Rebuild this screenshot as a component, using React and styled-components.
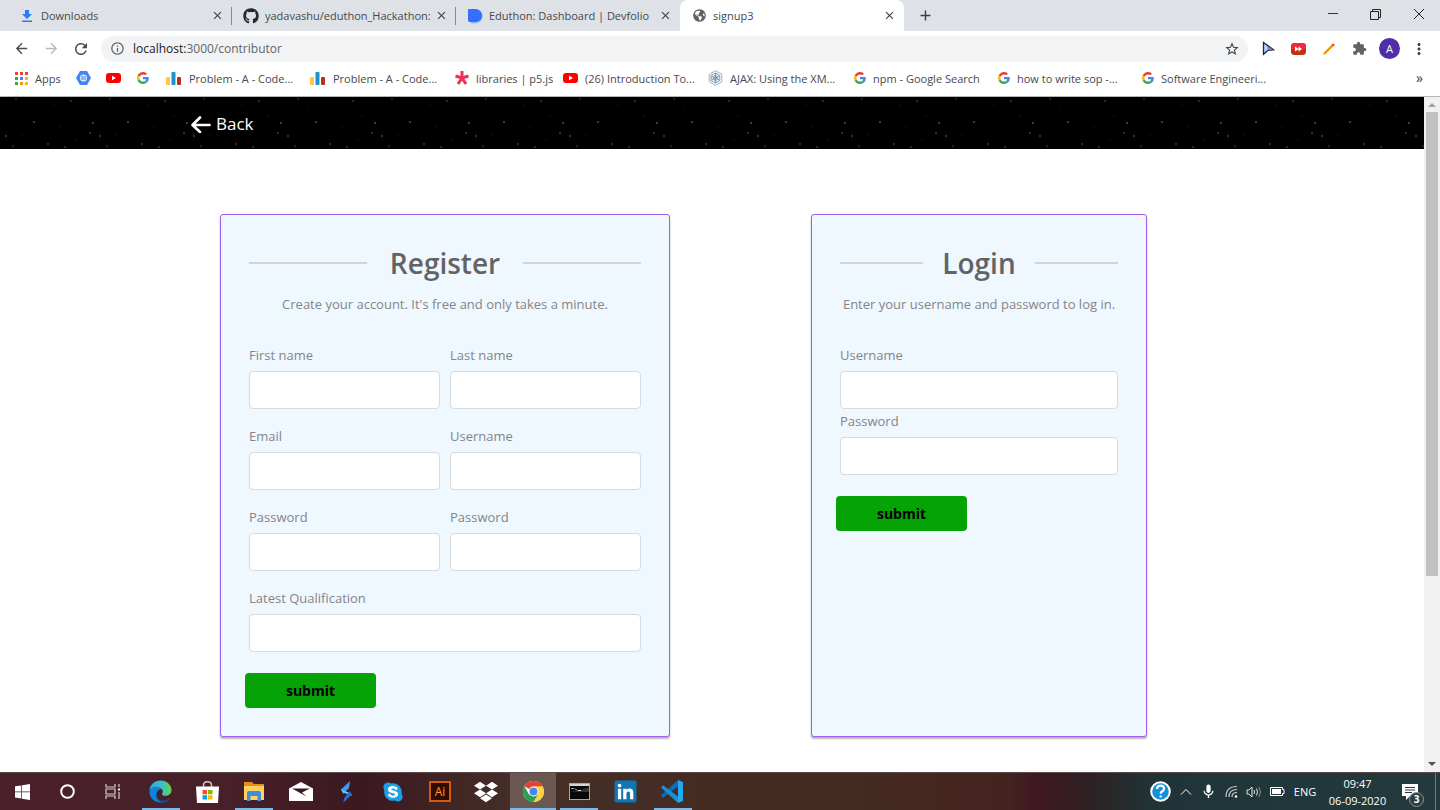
import React from 'react';
import styled, { createGlobalStyle, css } from 'styled-components';
import { FaGithub, FaDropbox, FaLinkedin, FaSkype, FaGlobeAmericas } from 'react-icons/fa';
import { MdExtension, MdMoreVert, MdStarBorder, MdInfoOutline, MdArrowBack, MdArrowForward, MdRefresh, MdClose, MdAdd, MdMic } from 'react-icons/md';

const GlobalStyle = createGlobalStyle`
* { box-sizing: border-box; }
body {
    margin: 0;
    background: #fff;
    font-family: 'Open Sans', 'Noto Sans', sans-serif;
}
button, input { font-family: inherit; }
svg { display: block; flex: none; }
`

const Window = styled.div`
min-height: 100vh;
display: flex;
flex-direction: column;
`

/* tab strip */
const TabStrip = styled.div`
display: flex;
align-items: stretch;
height: 31px;
padding-left: 8px;
background: #dee1e6;
`
const Tab = styled.div`
display: flex;
align-items: center;
flex: 0 1 224px;
min-width: 0;
padding: 0 8px 0 11px;
color: #45494d;
font-size: 11px;
${props => props.$active ? css`
    background: #fff;
    border-radius: 8px 8px 0 0;
` : css`
    background: linear-gradient(#85888c, #85888c) right center / 1px 18px no-repeat;
`}
${props => props.$last && css`background: none;`}
`
const TabIcon = styled.span`
display: flex;
justify-content: center;
flex: none;
width: 16px;
margin-right: 6px;
`
const TabTitle = styled.span`
flex: 1;
overflow: hidden;
white-space: nowrap;
`
const IconButton = styled.button`
display: flex;
align-items: center;
justify-content: center;
flex: none;
width: ${props => props.$w || 16}px;
padding: 0;
border: none;
background: none;
color: ${props => props.$color || '#3c4043'};
cursor: pointer;
`
const WindowControls = styled.div`
display: flex;
margin-left: auto;
padding-bottom: 3px;
`

/* address bar */
const Toolbar = styled.div`
display: flex;
align-items: center;
height: 35px;
padding: 0 7px 0 6px;
background: #fff;
`
const AddressBar = styled.div`
display: flex;
align-items: center;
flex: 1;
min-width: 0;
height: 26px;
margin: 0 5px;
padding: 0 4px 0 9px;
gap: 8px;
border-radius: 13px;
background: #f1f3f4;
color: #5f6368;
font-size: 12px;
`
const Url = styled.span`
flex: 1;
b {
    font-weight: normal;
    color: #202124;
}
`
const Avatar = styled.button`
width: 21px;
height: 21px;
margin: 0 5px;
padding: 0;
border: none;
border-radius: 50%;
background: #512da8;
color: #fff;
font-size: 11px;
`

/* bookmarks */
const Bookmarks = styled.nav`
display: flex;
align-items: center;
height: 31px;
padding: 0 17px 6px 13px;
border-bottom: 1px solid #b4b6b8;
background: #fff;
`
const Bookmark = styled.a`
display: flex;
align-items: center;
flex: 0 1 ${props => props.$w}px;
min-width: 0;
gap: 7px;
color: #45494d;
font-size: 11px;
white-space: nowrap;
text-decoration: none;
`
const More = styled.button`
margin-left: auto;
padding: 0;
border: none;
background: none;
color: #3c4043;
font-size: 14px;
line-height: 14px;
`

/* page */
const Viewport = styled.div`
flex: 1;
display: flex;
`
const Page = styled.main`
flex: 1;
min-width: 0;
`
const dot = (x, y, color) => `radial-gradient(circle at ${x}px ${y}px, ${color} 1px, transparent 1px)`
const Header = styled.header`
display: flex;
align-items: center;
height: 52px;
padding: 2px 0 0 191px;
background-color: #000;
background-image: ${[
    dot(16, 2, '#0a300d'), dot(71, 4, '#0b3a0e'), dot(34, 25, '#0f5514'),
    dot(93, 26, '#0f5514'), dot(90, 36, '#0c4010'), dot(6, 39, '#0c4a10'),
    dot(48, 47, '#0c4010'), dot(13, 49, '#0a300d'), dot(65, 50, '#0b3a0e'),
    dot(26, 12, '#0a0a0a'), dot(54, 8, '#0a0a0a'), dot(80, 19, '#0a0a0a'),
    dot(60, 30, '#0a0a0a'), dot(22, 38, '#0a0a0a'), dot(76, 43, '#0a0a0a')
].join(', ')};
background-size: 94px 52px;
`
const BackLink = styled.a`
display: flex;
align-items: center;
gap: 5px;
color: #fff;
font-size: 17px;
line-height: 24px;
text-decoration: none;
`
const Forms = styled.div`
display: grid;
grid-template-columns: minmax(0, 450fr) minmax(0, 336fr);
gap: 141px;
padding: 65px 277px 34px 220px;
`
const Card = styled.form`
padding: 28px;
border: 1px solid #a35ceb;
border-radius: 3px;
background: #eff7ff;
box-shadow: 0 2px 2px rgba(0, 0, 0, 0.3);
color: #858585;
`
const CardHead = styled.div`
display: flex;
align-items: center;
justify-content: space-between;
&::before, &::after {
    content: '';
    flex: 0 0 30%;
    height: 2px;
    background: #d1d3d4;
}
`
const Title = styled.h2`
margin: 0;
color: #636363;
font-size: 28px;
font-weight: 600;
line-height: 40px;
`
const Hint = styled.p`
margin: 9px 0 27px;
font-size: 13px;
line-height: 24px;
text-align: center;
white-space: nowrap;
`
const Fields = styled.div`
display: grid;
grid-template-columns: ${props => props.$cols === 2 ? '1fr 1fr' : '1fr'};
gap: ${props => props.$cols === 2 ? '15px 10px' : '0'};
`
const Field = styled.label`
display: flex;
flex-direction: column;
gap: 4px;
min-width: 0;
font-size: 13px;
line-height: 24px;
${props => props.$wide && css`grid-column: 1 / -1;`}
`
const Input = styled.input`
width: 100%;
height: 38px;
padding: 6px 12px;
border: 1px solid #d5dbe1;
border-radius: 4px;
outline: none;
background: #fff;
font-size: 13px;
`
const Submit = styled.button`
display: block;
width: 131px;
height: 35px;
margin: 21px 0 0 -4px;
padding: 0;
border: none;
border-radius: 4px;
background: #06a306;
color: #000;
font-size: 14px;
font-weight: bold;
cursor: pointer;
`

const Scrollbar = styled.div`
display: flex;
flex-direction: column;
align-items: center;
width: 16px;
padding: 5px 0;
gap: 5px;
background: #f1f1f1;
`
const Track = styled.div`
flex: 1;
width: 12px;
`
const Thumb = styled.div`
height: 72%;
background: #c1c1c1;
`

/* taskbar */
const TaskBar = styled.footer`
display: flex;
align-items: stretch;
height: 38px;
border-top: 1px solid #5c4a4c;
background: linear-gradient(to right, #4a202b 0, #47202a 16%, #3b1820 25%, #452f27 36%, #44291f 62%, #44231f 70%, #3f1822 72%, #2c2224 76%, #203437 80%, #243a3d 100%);
color: #fff;
`
const Task = styled.button`
display: flex;
align-items: center;
justify-content: center;
flex: none;
width: ${props => props.$w || 47}px;
padding: 0;
border: none;
background: ${props => props.$active ? '#6b5851' : 'none'};
color: #fff;
${props => props.$open && css`
    background-image: linear-gradient(#76b9ed, #76b9ed);
    background-position: center bottom;
    background-size: ${props.$active ? '100%' : '38px'} 2px;
    background-repeat: no-repeat;
`}
`
const Tray = styled.div`
display: flex;
align-items: center;
margin-left: auto;
`
const TrayButton = styled(Task)`
width: ${props => props.$w || 22}px;
height: 100%;
font-size: 11px;
`
const Clock = styled.time`
width: 73px;
font-size: 11px;
line-height: 17px;
text-align: center;
`
const Notices = styled.button`
position: relative;
width: 42px;
height: 100%;
padding: 0 0 0 8px;
border: none;
border-right: 1px solid #6e7c7e;
background: none;
margin-right: 4px;
`
const Count = styled.span`
position: absolute;
right: 11px;
bottom: 3px;
width: 15px;
height: 15px;
border: 1px solid #8b9698;
border-radius: 50%;
background: #2b3f42;
color: #fff;
font-size: 10px;
font-weight: bold;
line-height: 13px;
text-align: center;
`

const DownloadIcon = () => (
    <svg width="12" height="12" viewBox="0 0 12 12" fill="#2f7bf6">
        <path d="M4 0h4v4h3L6 9 1 4h3zM1 10.400h10V12H1z" />
    </svg>
)
const DevfolioIcon = () => (
    <svg width="15" height="16" viewBox="0 0 15 16">
        <path d="M1 2h7a6 6 0 0 1 6.500 7q-1 6.500-8 6.500H3z" fill="#8fbcff" />
        <path d="M1 1h7q6 1 6 6.500T8 14H1.500Q0 14 0 12V2q0-1 1-1z" fill="#3370ff" />
    </svg>
)
const GoogleIcon = () => (
    <svg width="12" height="12" viewBox="0 0 48 48">
        <path fill="#ea4335" d="M24 9.500c3.540 0 6.710 1.220 9.210 3.600l6.850-6.850C35.900 2.380 30.470 0 24 0 14.620 0 6.510 5.380 2.560 13.220l7.980 6.190C12.430 13.720 17.740 9.500 24 9.500z" />
        <path fill="#4285f4" d="M46.980 24.550c0-1.570-.15-3.090-.38-4.550H24v9.020h12.940c-.58 2.960-2.260 5.480-4.780 7.180l7.730 6c4.510-4.180 7.090-10.360 7.090-17.650z" />
        <path fill="#fbbc05" d="M10.530 28.590c-.48-1.450-.76-2.990-.76-4.590s.27-3.140.76-4.590l-7.980-6.190C.92 16.460 0 20.120 0 24c0 3.880.92 7.540 2.560 10.780z" />
        <path fill="#34a853" d="M24 48c6.480 0 11.930-2.130 15.890-5.810l-7.730-6c-2.150 1.450-4.920 2.300-8.160 2.300-6.260 0-11.570-4.220-13.470-9.910l-7.980 6.190C6.510 42.620 14.620 48 24 48z" />
    </svg>
)
const YoutubeIcon = () => (
    <svg width="15" height="12" viewBox="0 0 15 12">
        <rect y="1" width="15" height="10" rx="3" fill="#f00" />
        <path d="M6 3.700v4.600L10 6z" fill="#fff" />
    </svg>
)
const AppsIcon = () => {
    const colors = ['#ea4335', '#ea4335', '#ea4335', '#34a853', '#4285f4', '#fbbc05', '#34a853', '#f29900', '#fbbc05']
    return (
        <svg width="15" height="14" viewBox="0 0 15 14">
            {colors.map((c, i) => <rect key={i} x={2 + (i % 3) * 5} y={1 + Math.floor(i / 3) * 5} width="3" height="3" fill={c} />)}
        </svg>
    )
}
const HexIcon = () => (
    <svg width="15" height="14" viewBox="0 0 15 14">
        <path d="M4 0h7l4 7-4 7H4L0 7z" fill="#4285f4" />
        <circle cx="7.500" cy="7" r="3.600" fill="#dbe8fd" />
        <path d="M5 5.500h5v1H5zm0 2h5v1H5z" fill="#4285f4" />
    </svg>
)
const BarsIcon = () => (
    <svg width="16" height="13" viewBox="0 0 16 13">
        <rect y="5" width="4" height="8" rx="1" fill="#f9c846" />
        <rect x="5.500" width="4" height="13" rx="1" fill="#1e8fd0" />
        <rect x="11" y="5" width="4" height="8" rx="1" fill="#b8311b" />
    </svg>
)
const AsteriskIcon = () => (
    <svg width="14" height="14" viewBox="0 0 14 14" stroke="#f0304e" strokeWidth="3">
        <path d="M7 7V0M7 7l6.500-2M7 7l4 6M7 7l-4 6M7 7L.5 5" />
    </svg>
)
const NodeIcon = () => (
    <svg width="15" height="16" viewBox="0 0 15 16" fill="none" stroke="#7f97ad">
        <path d="M7.500.7l6.300 3.600v7.400l-6.300 3.600-6.300-3.600V4.300z" stroke="#8fb0cf" />
        <path d="M7.500 3l4.300 2.500v5L7.500 13l-4.300-2.500v-5zM3.200 5.500L7.500 8l4.300-2.500M7.500 3v10M3.200 10.500L7.500 8l4.300 2.500" />
        <circle cx="7.500" cy="8" r="2.400" />
    </svg>
)
const CursorIcon = () => (
    <svg width="13" height="15" viewBox="0 0 13 15">
        <path d="M1.500 1.500l10 7.200-5.500.6-4.500 4z" fill="#b9d2ff" stroke="#20243a" strokeWidth="1.300" />
        <path d="M6 9l5-.5L5 5z" fill="#9a70d0" />
    </svg>
)
const ForwardIcon = () => (
    <svg width="15" height="12" viewBox="0 0 15 12">
        <rect width="15" height="12" rx="3.500" fill="#c3320f" />
        <path d="M0 6V3.500Q0 0 3.500 0h8Q15 0 15 3.500V6z" fill="#f02a3c" />
        <path d="M4 3.500v5L7.500 6zM7.500 3.500v5L11 6z" fill="#fff" />
    </svg>
)
const PencilIcon = () => (
    <svg width="12" height="12" viewBox="0 0 12 12">
        <path d="M1.500 10.500l8-8" stroke="#f59300" strokeWidth="2.400" />
        <path d="M9.300 2.700L11 1" stroke="#e5484d" strokeWidth="2.400" />
        <path d="M0 12l1-2.500L2.500 11z" fill="#f5a300" />
    </svg>
)
const BackArrow = () => (
    <svg width="20" height="18" viewBox="0 0 20 18" fill="none" stroke="#fff" strokeWidth="2.600" strokeLinecap="round" strokeLinejoin="round">
        <path d="M18.500 10H2M9 2.500L1.500 10 9 17" />
    </svg>
)
const WindowsIcon = () => (
    <svg width="15" height="16" viewBox="0 0 15 16" fill="#fff">
        <path d="M0 2.300L6.300 1.400v6.200H0zM7 1.300L15 0v7.600H7zM0 8.300h6.300v6.200L0 13.600zM7 8.300h8V16l-8-1.300z" />
    </svg>
)
const TaskViewIcon = () => (
    <svg width="16" height="15" viewBox="0 0 16 15" fill="none" stroke="#d9cdd0" strokeWidth="1.200">
        <path d="M1 0v3h9V0M1 15v-3h9v3M1 5h9v5H1zM14 0v3M14 8v7" />
        <path d="M13 4.500h2v2h-2z" fill="#fff" stroke="none" />
    </svg>
)
const EdgeIcon = () => (
    <svg width="23" height="23" viewBox="0 0 24 24">
        <defs>
            <linearGradient id="edgeTop"><stop offset="0" stopColor="#29a7e0" /><stop offset=".5" stopColor="#35bfd4" /><stop offset="1" stopColor="#69cf4c" /></linearGradient>
        </defs>
        <path d="M.5 11C1 4.500 6 .5 12 .5c7 0 11.500 5 11.500 10 0 4-3 6-6.200 6-2.600 0-4-1-3.800-2 1.200-1.500 1-3 .5-4C12 6 3 6 .5 11z" fill="url(#edgeTop)" />
        <path d="M.5 11C3 6 11 6 13.500 10c-3-1-5.500 1.500-5.500 5 0 4 3 7.500 7 8.200-1 .3-2 .4-3 .3C5 23.500 0 18 .5 11z" fill="#1283d8" />
        <path d="M9.500 11c-2.500 2-2.500 6 0 8.500 3 2.800 8 2.500 12-.5.500-.3.800 0 .5.500-2 3-5 4-7 4-5 0-8-4-8-8 0-2.500 1-4 2.500-4.500z" fill="#124f94" />
    </svg>
)
const StoreIcon = () => (
    <svg width="23" height="22" viewBox="0 0 23 22">
        <path d="M7.500 6V4q0-3.300 4-3.300t4 3.300v2" fill="none" stroke="#c9c2c4" strokeWidth="1.500" />
        <path d="M0 5.500h23L22 22H1z" fill="#fff" />
        <path d="M6.500 9h4.500v4.300H6.500z" fill="#f25022" /><path d="M12 9h4.500v4.300H12z" fill="#7fba00" />
        <path d="M6.500 14.200h4.500v4.300H6.500z" fill="#00a4ef" /><path d="M12 14.200h4.500v4.300H12z" fill="#ffb900" />
    </svg>
)
const FolderIcon = () => (
    <svg width="22" height="19" viewBox="0 0 22 19">
        <path d="M1 0h8l2 2h10v16H1z" fill="#e39116" />
        <path d="M1 4h20v14H1z" fill="#ffd260" />
        <path d="M4 11q0-2 2-2h10q2 0 2 2v8h-3.500v-5h-7v5H4z" fill="#3f8edb" />
    </svg>
)
const MailIcon = () => (
    <svg width="24" height="19" viewBox="0 0 24 19">
        <path d="M0 6.500L12 0l12 6.500V19H0z" fill="#fff" />
        <path d="M3 6.500h18l-8 4 4.500 4z" fill="#3b1820" />
    </svg>
)
const BoltIcon = () => (
    <svg width="13" height="22" viewBox="0 0 13 22">
        <path d="M10 0L1 8.500 3 13l6-6z" fill="#3a9cf3" />
        <path d="M1 8.500L10 12l2 3-9-3.500z" fill="#65c4ff" />
        <path d="M12 13.500L3 22l1.500-5.500L9.500 10z" fill="#246fd6" />
    </svg>
)
const IllustratorIcon = () => (
    <svg width="22" height="21" viewBox="0 0 22 21">
        <rect x="1" y="1" width="20" height="19" fill="#300d00" stroke="#d45a0c" strokeWidth="2" />
        <text x="11" y="15" fill="#ff9a2e" fontSize="12" textAnchor="middle" fontFamily="Open Sans, sans-serif">Ai</text>
    </svg>
)
const ChromeIcon = () => (
    <svg width="21" height="21" viewBox="0 0 24 24">
        <circle cx="12" cy="12" r="12" fill="#fff" />
        <path d="M12 12L1.600 6A12 12 0 0 1 22.400 6z" fill="#e04335" />
        <path d="M12 6h10.400A12 12 0 0 1 12 24l5.200-9z" fill="#fdd13e" />
        <path d="M6.800 15L1.600 6A12 12 0 0 0 12 24l5.200-9z" fill="#2da04f" />
        <circle cx="12" cy="12" r="5.800" fill="#fff" />
        <circle cx="12" cy="12" r="4.600" fill="#4688f1" />
    </svg>
)
const TerminalIcon = () => (
    <svg width="21" height="17" viewBox="0 0 21 17">
        <rect x=".5" y=".5" width="20" height="16" fill="#080808" stroke="#a8a8a8" />
        <path d="M1 1h19v2H1z" fill="#d6d6d6" />
        <path d="M1 9q10-1 19-5v5z" fill="#333" />
        <path d="M2.500 5.500h2M6 5.500l2 2M9 7.500h3" stroke="#ddd" />
    </svg>
)
const CodeIcon = () => (
    <svg width="23" height="23" viewBox="0 0 23 23">
        <path d="M17 0l5 2.300v18.400L17 23z" fill="#24a9f2" />
        <path d="M0 15.500L17 0v6.500L2 17.800z" fill="#0b6fb5" />
        <path d="M0 7.500l2-2.300L17 16.500V23z" fill="#1590dc" />
    </svg>
)
const HelpIcon = () => (
    <svg width="21" height="21" viewBox="0 0 21 21">
        <circle cx="10.500" cy="10.500" r="9.300" fill="#1590d8" stroke="#fff" strokeWidth="2" />
        <path d="M7 8q.3-3.300 3.600-3.300T14 7.800q0 1.700-2 2.700-1.300.8-1.300 2.300M10.700 14.500v2" fill="none" stroke="#fff" strokeWidth="2.200" />
    </svg>
)
const WifiIcon = () => (
    <svg width="13" height="13" viewBox="0 0 13 13" fill="none" stroke="#c5cccd" strokeWidth="1.200">
        <path d="M1 12Q1 1.500 12 1.500M4 12q0-7.500 8-7.500M7 12q0-4.500 5-4.500" />
        <circle cx="11" cy="11.500" r="1.300" fill="#fff" stroke="none" />
    </svg>
)
const SoundIcon = () => (
    <svg width="16" height="12" viewBox="0 0 16 12" fill="none" stroke="#dfe3e4">
        <path d="M1 4h2l3-3v10L3 8H1zM8 4q1 2 0 4M10.500 2.500q2 3.500 0 7" />
        <path d="M13 1q3 5 0 10" stroke="#829092" />
    </svg>
)
const BatteryIcon = () => (
    <svg width="15" height="9" viewBox="0 0 15 9">
        <path d="M.5.500h12v2H14v4h-1.500v2H.5z" fill="none" stroke="#fff" />
        <path d="M2 2h9v5H2z" fill="#fff" />
    </svg>
)
const NoticeIcon = () => (
    <svg width="16" height="16" viewBox="0 0 16 16">
        <path d="M0 0h16v12H8l-4 4v-4H0z" fill="#fff" />
        <path d="M3 3.500h10M3 6h10M3 8.500h7" stroke="#243a3d" />
    </svg>
)

const tabs = [
    { title: 'Downloads', icon: <DownloadIcon /> },
    { title: 'yadavashu/eduthon_Hackathon:', icon: <FaGithub size={16} color="#24292e" /> },
    { title: 'Eduthon: Dashboard | Devfolio', icon: <DevfolioIcon />, last: true },
    { title: 'signup3', icon: <FaGlobeAmericas size={13} color="#5f6368" />, active: true },
]

const bookmarks = [
    { title: 'Apps', icon: <AppsIcon />, w: 63 },
    { label: 'Docs', icon: <HexIcon />, w: 30 },
    { label: 'YouTube', icon: <YoutubeIcon />, w: 31 },
    { label: 'Google', icon: <GoogleIcon />, w: 29 },
    { title: 'Problem - A - Code...', icon: <BarsIcon />, w: 144 },
    { title: 'Problem - A - Code...', icon: <BarsIcon />, w: 145 },
    { title: 'libraries | p5.js', icon: <AsteriskIcon />, w: 108 },
    { title: '(26) Introduction To...', icon: <YoutubeIcon />, w: 145 },
    { title: 'AJAX: Using the XM...', icon: <NodeIcon />, w: 146 },
    { title: 'npm - Google Search', icon: <GoogleIcon />, w: 144 },
    { title: 'how to write sop -...', icon: <GoogleIcon />, w: 144 },
    { title: 'Software Engineeri...', icon: <GoogleIcon />, w: 144 },
]

const registerFields = [
    { label: 'First name' },
    { label: 'Last name' },
    { label: 'Email', type: 'email' },
    { label: 'Username' },
    { label: 'Password', type: 'password' },
    { label: 'Password', type: 'password' },
    { label: 'Latest Qualification', wide: true },
]
const loginFields = [
    { label: 'Username' },
    { label: 'Password', type: 'password' },
]

const tasks = [
    { name: 'Start', icon: <WindowsIcon />, w: 45 },
    { name: 'Search', icon: <svg width="15" height="15" viewBox="0 0 15 15"><circle cx="7.500" cy="7.500" r="6.300" fill="none" stroke="#fff" strokeWidth="2" /></svg>, w: 45 },
    { name: 'Task view', icon: <TaskViewIcon />, w: 46 },
    { name: 'Edge', icon: <EdgeIcon />, w: 49, open: true },
    { name: 'Store', icon: <StoreIcon />, w: 44 },
    { name: 'Files', icon: <FolderIcon />, w: 49, open: true },
    { name: 'Mail', icon: <MailIcon />, w: 45 },
    { name: 'Bolt', icon: <BoltIcon />, w: 46 },
    { name: 'Skype', icon: <FaSkype size={22} color="#1c9fe6" style={{ background: 'radial-gradient(#fff 50%, transparent 52%)' }} />, w: 48 },
    { name: 'Illustrator', icon: <IllustratorIcon />, w: 45 },
    { name: 'Dropbox', icon: <FaDropbox size={24} />, w: 48 },
    { name: 'Chrome', icon: <ChromeIcon />, w: 46, open: true, active: true },
    { name: 'Terminal', icon: <TerminalIcon />, w: 46, open: true },
    { name: 'LinkedIn', icon: <FaLinkedin size={25} color="#0e76b4" style={{ background: 'linear-gradient(#fff, #fff) center / 18px 18px no-repeat' }} />, w: 47 },
    { name: 'Code', icon: <CodeIcon />, w: 47, open: true },
]

const FormCard = ({ title, hint, fields, cols }) => {
    return (
        <Card onSubmit={e => e.preventDefault()}>
            <CardHead><Title>{title}</Title></CardHead>
            <Hint>{hint}</Hint>
            <Fields $cols={cols}>
                {fields.map((f, i) => (
                    <Field key={i} $wide={f.wide}>
                        {f.label}
                        <Input type={f.type || 'text'} />
                    </Field>
                ))}
            </Fields>
            <Submit type="submit">submit</Submit>
        </Card>
    );
};

const App = () => {
    return (
        <Window>
            <GlobalStyle />
            <TabStrip>
                {tabs.map(t => (
                    <Tab key={t.title} $active={t.active} $last={t.last}>
                        <TabIcon>{t.icon}</TabIcon>
                        <TabTitle>{t.title}</TabTitle>
                        <IconButton $w={13} aria-label="Close tab"><MdClose size={13} /></IconButton>
                    </Tab>
                ))}
                <IconButton $w={42} aria-label="New tab"><MdAdd size={17} /></IconButton>
                <WindowControls>
                    <IconButton $w={42} aria-label="Minimize">
                        <svg width="10" height="10" viewBox="0 0 10 10" stroke="#333"><path d="M0 4.500h10" /></svg>
                    </IconButton>
                    <IconButton $w={43} aria-label="Restore">
                        <svg width="11" height="11" viewBox="0 0 11 11" fill="none" stroke="#222"><path d="M.5 2.500h8v8h-8zM2.500 2.500v-2h8v8h-2" /></svg>
                    </IconButton>
                    <IconButton $w={43} aria-label="Close">
                        <svg width="10" height="10" viewBox="0 0 10 10" stroke="#222"><path d="M0 0l10 10M10 0L0 10" /></svg>
                    </IconButton>
                </WindowControls>
            </TabStrip>
            <Toolbar>
                <IconButton $w={30} $color="#4a4d51" aria-label="Back"><MdArrowBack size={17} /></IconButton>
                <IconButton $w={30} $color="#b8babd" aria-label="Forward"><MdArrowForward size={17} /></IconButton>
                <IconButton $w={30} $color="#4a4d51" aria-label="Reload"><MdRefresh size={18} /></IconButton>
                <AddressBar>
                    <MdInfoOutline size={15} />
                    <Url><b>localhost:</b>3000/contributor</Url>
                    <IconButton $w={24} aria-label="Bookmark"><MdStarBorder size={16} /></IconButton>
                </AddressBar>
                <IconButton $w={30} aria-label="Cursor"><CursorIcon /></IconButton>
                <IconButton $w={31} aria-label="Skip"><ForwardIcon /></IconButton>
                <IconButton $w={30} aria-label="Pencil"><PencilIcon /></IconButton>
                <IconButton $w={30} $color="#5f6368" aria-label="Extensions"><MdExtension size={15} /></IconButton>
                <Avatar>A</Avatar>
                <IconButton $w={28} aria-label="Menu"><MdMoreVert size={18} /></IconButton>
            </Toolbar>
            <Bookmarks>
                {bookmarks.map((b, i) => (
                    <Bookmark key={i} href="#" $w={b.w} aria-label={b.label}>{b.icon}{b.title}</Bookmark>
                ))}
                <More>»</More>
            </Bookmarks>
            <Viewport>
                <Page>
                    <Header>
                        <BackLink href="#"><BackArrow />Back</BackLink>
                    </Header>
                    <Forms>
                        <FormCard title="Register" hint="Create your account. It's free and only takes a minute." fields={registerFields} cols={2} />
                        <FormCard title="Login" hint="Enter your username and password to log in." fields={loginFields} cols={1} />
                    </Forms>
                </Page>
                <Scrollbar>
                    <svg width="8" height="5" viewBox="0 0 8 5"><path d="M0 5l4-4 4 4z" fill="#a3a3a3" /></svg>
                    <Track><Thumb /></Track>
                    <svg width="8" height="5" viewBox="0 0 8 5"><path d="M0 0l4 4 4-4z" fill="#505050" /></svg>
                </Scrollbar>
            </Viewport>
            <TaskBar>
                {tasks.map(t => (
                    <Task key={t.name} $w={t.w} $open={t.open} $active={t.active} aria-label={t.name}>{t.icon}</Task>
                ))}
                <Tray>
                    <TrayButton $w={30} aria-label="Help"><HelpIcon /></TrayButton>
                    <TrayButton aria-label="Show hidden icons">
                        <svg width="12" height="7" viewBox="0 0 12 7" fill="none" stroke="#fff"><path d="M1 6.500l5-5 5 5" /></svg>
                    </TrayButton>
                    <TrayButton aria-label="Microphone"><MdMic size={17} /></TrayButton>
                    <TrayButton $w={24} aria-label="Network"><WifiIcon /></TrayButton>
                    <TrayButton aria-label="Volume"><SoundIcon /></TrayButton>
                    <TrayButton $w={24} aria-label="Battery"><BatteryIcon /></TrayButton>
                    <TrayButton $w={32}>ENG</TrayButton>
                    <Clock>09:47<br />06-09-2020</Clock>
                    <Notices aria-label="Notifications"><NoticeIcon /><Count>3</Count></Notices>
                </Tray>
            </TaskBar>
        </Window>
    );
};

export default App;
